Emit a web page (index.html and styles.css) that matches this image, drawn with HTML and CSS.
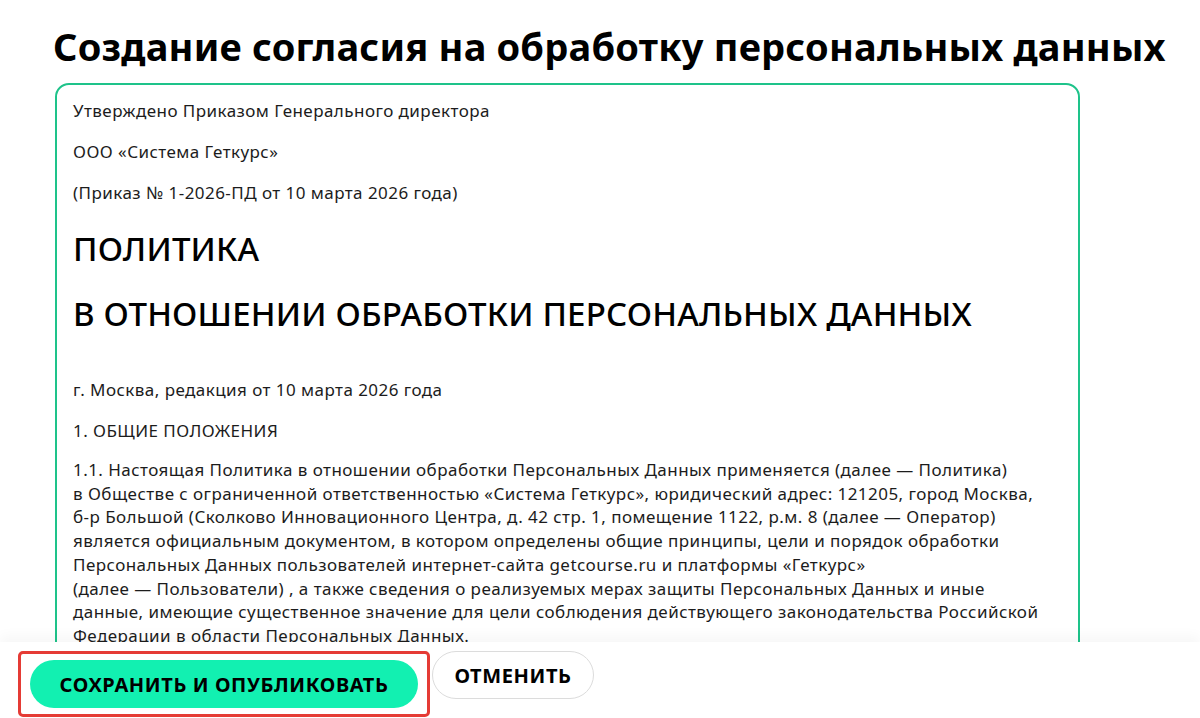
FILE: index.html
```html
<!doctype html>
<html>
<head>
<meta charset="utf-8">
<title>Создание согласия на обработку персональных данных</title>
<link rel="stylesheet" href="styles.css">
</head>
<body>
    <div class="page">
        <h1 class="page-title">Создание согласия на обработку персональных данных</h1>

        <div class="editor">
            <p>Утверждено Приказом Генерального директора</p>
            <p>ООО «Система Геткурс»</p>
            <p>(Приказ № 1-2026-ПД от 10 марта 2026 года)</p>
            <h2>ПОЛИТИКА</h2>
            <h2>В ОТНОШЕНИИ ОБРАБОТКИ ПЕРСОНАЛЬНЫХ ДАННЫХ</h2>
            <p class="gap">г. Москва, редакция от 10 марта 2026 года</p>
            <p class="section">1. ОБЩИЕ ПОЛОЖЕНИЯ</p>
            <p class="para">1.1. Настоящая Политика в отношении обработки Персональных Данных применяется (далее — Политика)<br>
            в Обществе с ограниченной ответственностью «Система Геткурс», юридический адрес: 121205, город Москва,<br>
            б-р Большой (Сколково Инновационного Центра, д. 42 стр. 1, помещение 1122, р.м. 8 (далее — Оператор)<br>
            является официальным документом, в котором определены общие принципы, цели и порядок обработки<br>
            Персональных Данных пользователей интернет-сайта getcourse.ru и платформы «Геткурс»<br>
            (далее — Пользователи) , а также сведения о реализуемых мерах защиты Персональных Данных и иные<br>
            данные, имеющие существенное значение для цели соблюдения действующего законодательства Российской<br>
            Федерации в области Персональных Данных.</p>
        </div>
    </div>

    <div class="actions">
        <div class="actions-mark">
            <button class="btn btn-primary">СОХРАНИТЬ И ОПУБЛИКОВАТЬ</button>
        </div>
        <button class="btn btn-ghost">ОТМЕНИТЬ</button>
    </div>
</body>
</html>
```

FILE: styles.css
```css
* {margin:0; padding:0; box-sizing:border-box;}
html, body {height:100%; overflow:hidden;}
body {background:#fff; color:#111; font-family:"Noto Sans", "Open Sans", sans-serif; display:flex; flex-direction:column;}

.page {flex:1; min-height:0; overflow:hidden; padding:22px 0 0 53px;}
.page-title {font-size:38px; line-height:48px; font-weight:700; color:#000; letter-spacing:0.2px; white-space:nowrap;}

.editor {width:1025px; margin:13px 0 0 2px; border:2px solid #1ec38a; border-radius:14px; padding:14px 16px 40px 16px; height:800px;}
.editor p {font-size:17px; line-height:24px; letter-spacing:0.45px; margin-bottom:17px; color:#1c1c1c; white-space:nowrap;}
.editor h2 {font-size:33px; line-height:42px; font-weight:500; letter-spacing:0.2px; color:#000; margin:23px 0;}
.editor .gap {margin-top:43px;}
.editor .section {margin-bottom:15px;}
.editor .para {line-height:23.7px;}

/* нижняя панель с кнопками */
.actions {flex:none; position:relative; height:76px; background:#fff; box-shadow:0 -6px 12px rgba(0,0,0,0.035); display:flex; align-items:flex-start; gap:2px; padding:9px 0 0 18px;}
.actions-mark {border:3px solid #e53b35; border-radius:5px; padding:6px 9px;}
.btn {height:48px; border-radius:24px; font-family:"Noto Sans", sans-serif; font-weight:700; font-size:20px; letter-spacing:0.6px; color:#000; cursor:pointer;}
.btn-primary {width:388px; background:#12f0b1; border:0;}
.btn-ghost {width:162px; background:#fff; border:1px solid #dcdcdc;}
```
